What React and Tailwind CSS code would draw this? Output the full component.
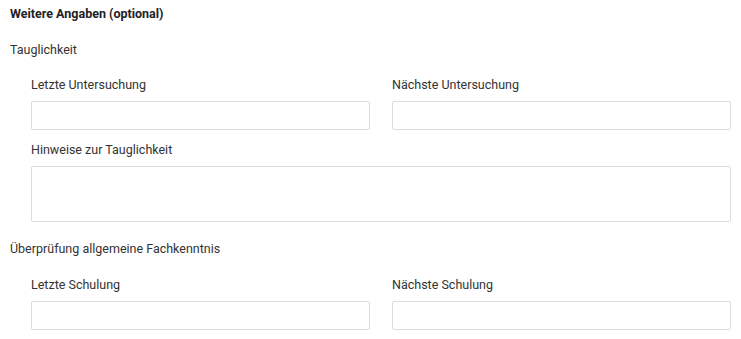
import React from 'react';

const Field = ({ label }) => (
  <div>
    <label className="block h-4 leading-4 text-[12.5px] text-[#333]">{label}</label>
    <input
      type="text"
      className="mt-2 block w-full h-[29px] border border-[#dcdcdc] rounded-[2px] bg-white outline-none"
    />
  </div>
);

export default function App() {
  return (
    <div
      className="w-[741px] h-[339px] bg-white pl-[10px] pt-[6px] text-[#333]"
      style={{ fontFamily: 'Roboto, "Liberation Sans", sans-serif' }}
    >
      <h2 className="h-4 leading-4 text-[12.5px] font-bold text-[#222]">Weitere Angaben (optional)</h2>

      <div className="mt-5 h-4 leading-4 text-[12.5px]">Tauglichkeit</div>
      <div className="pl-[21px] w-[721px]">
        <div className="mt-[19px] grid grid-cols-2 gap-x-[22px]">
          <Field label="Letzte Untersuchung" />
          <Field label="Nächste Untersuchung" />
        </div>
        <div className="mt-3">
          <label className="block h-4 leading-4 text-[12.5px]">Hinweise zur Tauglichkeit</label>
          <textarea className="mt-2 block w-full h-[56px] border border-[#dcdcdc] rounded-[2px] bg-white outline-none resize-none" />
        </div>
      </div>

      <div className="mt-[19px] h-4 leading-4 text-[12.5px]">Überprüfung allgemeine Fachkenntnis</div>
      <div className="pl-[21px] w-[721px]">
        <div className="mt-5 grid grid-cols-2 gap-x-[22px]">
          <Field label="Letzte Schulung" />
          <Field label="Nächste Schulung" />
        </div>
      </div>
    </div>
  );
}
